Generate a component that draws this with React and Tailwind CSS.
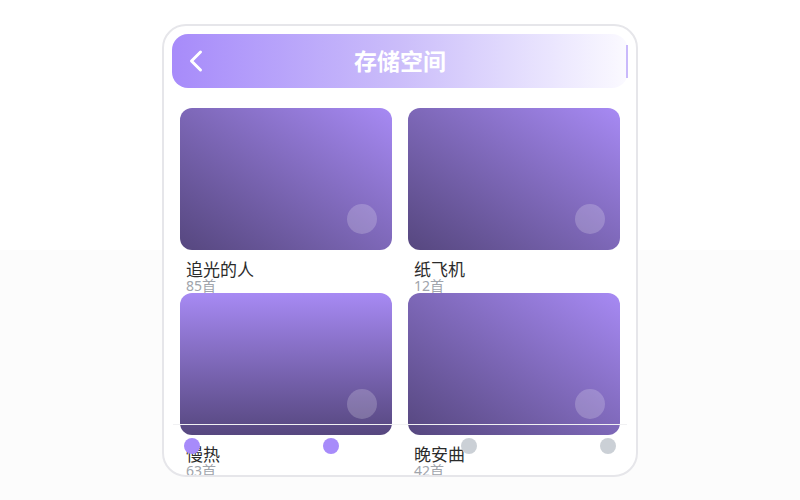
import { ChevronLeft } from "lucide-react";

const albums = [
  { name: "追光的人", count: "85首", bg: "bg-gradient-to-bl" },
  { name: "纸飞机", count: "12首", bg: "bg-gradient-to-bl" },
  { name: "慢热", count: "63首", bg: "bg-gradient-to-b" },
  { name: "晚安曲", count: "42首", bg: "bg-gradient-to-bl" },
];

const dots = ["bg-[#a78bfa]", "bg-[#a78bfa]", "bg-[#cbd0d6]", "bg-[#cbd0d6]"];

export default function App() {
  return (
    <div
      className="w-full h-[500px] flex justify-center pt-6 bg-[linear-gradient(#ffffff_0,#ffffff_250px,#fcfcfc_250px)]"
      style={{ fontFamily: '"Noto Sans", "Noto Sans CJK SC", sans-serif' }}
    >
      {/* phone frame */}
      <div className="relative w-[476px] h-[453px] rounded-[24px] border-2 border-[#e6e6ea] bg-white overflow-hidden">
        {/* header */}
        <div className="relative mx-2 mt-2 h-[54px] rounded-2xl bg-gradient-to-r from-[#a78bfa] via-[#cbbdfa] to-[#fbfaff] flex items-center px-[6px]">
          <ChevronLeft className="w-9 h-9 text-white" strokeWidth={2} />
          <h1 className="flex-1 text-center text-[23px] leading-7 font-bold text-white">存储空间</h1>
          <div className="w-9 h-9" />
          <div className="absolute right-0 top-[11px] w-[2px] h-[33px] bg-[#c9b9fb]" />
        </div>

        {/* album grid */}
        <div className="grid grid-cols-2 gap-x-4 px-4 mt-5">
          {albums.map((a) => (
            <div key={a.name} className="h-[185px]">
              <div
                className={`h-[142px] rounded-xl ${a.bg} from-[#a78af4] to-[#56477f] flex items-end justify-end pr-[15px] pb-4`}
              >
                <div className="w-[30px] h-[30px] rounded-full bg-white/20" />
              </div>
              <div className="px-[6px] pt-[11px]">
                <p className="text-[17px] leading-[18px] text-[#2b2b2b]">{a.name}</p>
                <p className="text-sm leading-[14px] text-[#a0a4ab]">{a.count}</p>
              </div>
            </div>
          ))}
        </div>

        {/* bottom nav */}
        <div className="absolute left-[9px] right-[9px] bottom-0 h-[51px] border-t border-[#f1f1f3] flex justify-between items-start pt-[13px] px-[11px]">
          {dots.map((c, i) => (
            <span key={i} className={`w-4 h-4 rounded-full ${c}`} />
          ))}
        </div>
      </div>
    </div>
  );
}
